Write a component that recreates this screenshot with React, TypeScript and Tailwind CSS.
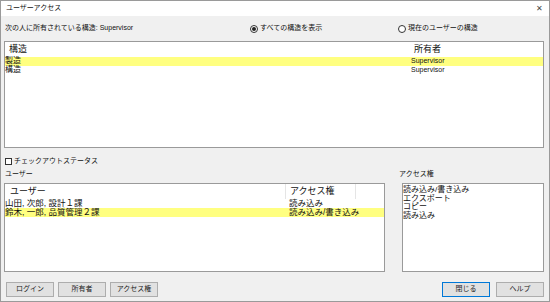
import React from 'react';

const font = { fontFamily: '"Liberation Sans", "Noto Sans CJK JP", sans-serif' };

const objects = [
  { name: '製造', owner: 'Supervisor', selected: true },
  { name: '構造', owner: 'Supervisor', selected: false },
];

const users = [
  { name: '山田, 次郎, 設計１課', access: '読み込み', selected: false },
  { name: '鈴木, 一郎, 品質管理２課', access: '読み込み/書き込み', selected: true },
];

const rights = ['読み込み/書き込み', 'エクスポート', 'コピー', '読み込み'];

function Radio({ checked, label }: { checked?: boolean; label: string }) {
  return (
    <div className="flex items-center gap-[2px]">
      <span className="w-[8px] h-[8px] rounded-full border border-[#333] bg-white flex items-center justify-center">
        {checked && <span className="w-[4px] h-[4px] rounded-full bg-[#222]" />}
      </span>
      <span>{label}</span>
    </div>
  );
}

function Btn({ label, focus }: { label: string; focus?: boolean }) {
  return (
    <button
      className={`w-[48px] h-[15px] flex items-center justify-center text-[7px] text-[#222] bg-[#e1e1e1] border ${
        focus ? 'border-[#0078d7]' : 'border-[#adadad]'
      }`}
    >
      {label}
    </button>
  );
}

export default function App() {
  return (
    <div
      className="w-[550px] h-[302px] bg-[#f0f0f0] border border-[#9a9a9a] flex flex-col text-[#111] overflow-hidden"
      style={font}
    >
      <div className="h-[15px] bg-white flex items-center justify-between pl-[5px] pr-[6px] text-[7px] shrink-0">
        <span>ユーザーアクセス</span>
        <span className="text-[8px] leading-none text-[#444]">✕</span>
      </div>

      <div className="h-[25px] flex items-center text-[7px] shrink-0">
        <span className="w-[249px] pl-[4px]">次の人に所有されている構造: Supervisor</span>
        <div className="w-[148px]">
          <Radio checked label="すべての構造を表示" />
        </div>
        <Radio label="現在のユーザーの構造" />
      </div>

      <div className="mx-[3px] mr-[5px] h-[107px] bg-white border border-[#9a9a9a] shrink-0">
        <div className="h-[15px] flex items-center text-[9px]">
          <span className="w-[406px] pl-[4px]">構造</span>
          <span className="pl-[3px]">所有者</span>
        </div>
        {objects.map((o) => (
          <div
            key={o.name}
            className={`h-[8.5px] flex items-center text-[8px] leading-[8px] ${o.selected ? 'bg-[#ffff80]' : ''}`}
          >
            <span className="w-[406px]">{o.name}</span>
            <span className="text-[7px]">{o.owner}</span>
          </div>
        ))}
      </div>

      <div className="h-[21px] flex items-center gap-[2px] pl-[4px] pt-[5px] text-[7px] shrink-0">
        <span className="w-[7px] h-[7px] border border-[#333] bg-white" />
        <span>チェックアウトステータス</span>
      </div>

      <div className="h-[14px] flex items-start text-[7px] shrink-0">
        <span className="w-[398px] pl-[4px]">ユーザー</span>
        <span>アクセス権</span>
      </div>

      <div className="flex gap-[17px] pl-[3px] pr-[5px] h-[89px] shrink-0">
        <div className="w-[381px] bg-white border border-[#9a9a9a]">
          <div className="h-[15px] flex items-center text-[9px]">
            <span className="w-[281px] h-full flex items-center pl-[5px] border-r border-[#e5e5e5]">ユーザー</span>
            <span className="w-[70px] h-full flex items-center pl-[4px] border-r border-[#e5e5e5]">アクセス権</span>
          </div>
          {users.map((u) => (
            <div key={u.name} className={`h-[9px] flex items-center text-[8.5px] leading-[9px] ${u.selected ? 'bg-[#ffff80]' : ''}`}>
              <span className="w-[284px]">{u.name}</span>
              <span>{u.access}</span>
            </div>
          ))}
        </div>
        <div className="flex-1 bg-white border border-[#9a9a9a] pt-[2px]">
          {rights.map((r, i) => (
            <div key={i} className="h-[8.5px] flex items-center text-[8px] leading-[8px]">
              {r}
            </div>
          ))}
        </div>
      </div>

      <div className="flex items-center justify-between pl-[5px] pr-[5px] mt-[10px]">
        <div className="flex gap-[4px]">
          <Btn label="ログイン" />
          <Btn label="所有者" />
          <Btn label="アクセス権" />
        </div>
        <div className="flex gap-[6px]">
          <Btn label="閉じる" focus />
          <Btn label="ヘルプ" />
        </div>
      </div>
    </div>
  );
}
